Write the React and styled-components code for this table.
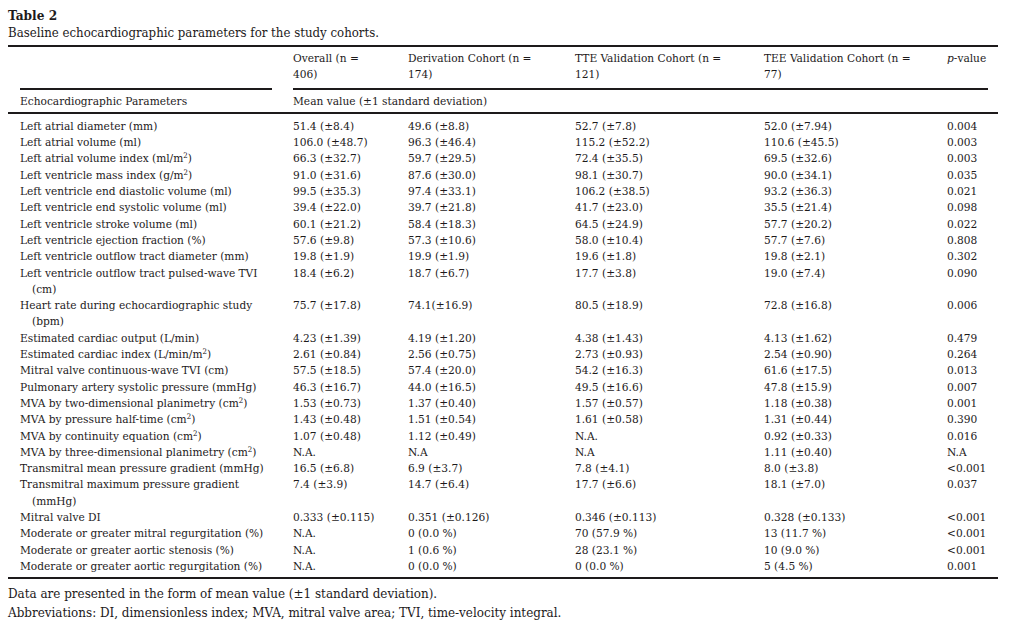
import React from 'react';
import styled, { createGlobalStyle } from 'styled-components';

const GlobalStyle = createGlobalStyle`
    html, body {
        margin: 0;
        padding: 0;
        background: #ffffff;
    }
    body {
        font-family: "DejaVu Serif Condensed", "DejaVu Serif", "Liberation Serif", serif;
        font-stretch: condensed;
        color: #1d1a1b;
    }
`

const COLUMNS = '285px 115px 167px 189px 183px 51px';

const Page = styled.div`
    padding: 7px 8px 0 8px;
    width: 990px;
`

const Title = styled.div`
    font-size: 13.5px;
    font-weight: 700;
    line-height: 17px;
`

const Caption = styled.div`
    font-size: 13.1px;
    line-height: 17px;
    margin-bottom: 4px;
`

const Table = styled.div`
    border-top: 2px solid #1d1a1b;
    border-bottom: 2px solid #1d1a1b;
    font-size: 11.8px;
    line-height: 16.3px;
`

const Row = styled.div`
    display: grid;
    grid-template-columns: ${COLUMNS};
    padding-top: ${(p) => p.$top || 0}px;
    padding-bottom: ${(p) => p.$bottom || 0}px;
    border-bottom: ${(p) => (p.$ruled ? '2px solid #1d1a1b' : 'none')};
`

const Cell = styled.div`
    padding-left: ${(p) => (p.$first ? 12 : 0)}px;
    white-space: nowrap;
    grid-column: ${(p) => p.$span || 'auto'};
`

const Wrap = styled.div`
    padding-left: 12px;
`

const RuleRow = styled.div`
    display: grid;
    grid-template-columns: ${COLUMNS};
`

const Rule = styled.div`
    height: 2px;
    background: #1d1a1b;
    grid-column: ${(p) => p.$span};
    margin-left: ${(p) => p.$left}px;
    margin-right: ${(p) => p.$right}px;
`

const Sup = styled.sup`
    font-size: 0.66em;
    line-height: 0;
    vertical-align: 0.55em;
`

const Italic = styled.i`
    font-style: italic;
`

const Notes = styled.div`
    font-size: 13.3px;
    line-height: 19px;
    margin-top: 5px;
`

const withSup = (text) => {
    const parts = text.split('^2');
    return parts.map((part, i) => (
        <React.Fragment key={i}>
            {part}
            {i < parts.length - 1 && <Sup>2</Sup>}
        </React.Fragment>
    ));
};

const headers = [
    ['Overall (n =', '406)'],
    ['Derivation Cohort (n =', '174)'],
    ['TTE Validation Cohort (n =', '121)'],
    ['TEE Validation Cohort (n =', '77)'],
];

const rows = [
    { label: 'Left atrial diameter (mm)', values: ['51.4 (±8.4)', '49.6 (±8.8)', '52.7 (±7.8)', '52.0 (±7.94)', '0.004'] },
    { label: 'Left atrial volume (ml)', values: ['106.0 (±48.7)', '96.3 (±46.4)', '115.2 (±52.2)', '110.6 (±45.5)', '0.003'] },
    { label: 'Left atrial volume index (ml/m^2)', values: ['66.3 (±32.7)', '59.7 (±29.5)', '72.4 (±35.5)', '69.5 (±32.6)', '0.003'] },
    { label: 'Left ventricle mass index (g/m^2)', values: ['91.0 (±31.6)', '87.6 (±30.0)', '98.1 (±30.7)', '90.0 (±34.1)', '0.035'] },
    { label: 'Left ventricle end diastolic volume (ml)', values: ['99.5 (±35.3)', '97.4 (±33.1)', '106.2 (±38.5)', '93.2 (±36.3)', '0.021'] },
    { label: 'Left ventricle end systolic volume (ml)', values: ['39.4 (±22.0)', '39.7 (±21.8)', '41.7 (±23.0)', '35.5 (±21.4)', '0.098'] },
    { label: 'Left ventricle stroke volume (ml)', values: ['60.1 (±21.2)', '58.4 (±18.3)', '64.5 (±24.9)', '57.7 (±20.2)', '0.022'] },
    { label: 'Left ventricle ejection fraction (%)', values: ['57.6 (±9.8)', '57.3 (±10.6)', '58.0 (±10.4)', '57.7 (±7.6)', '0.808'] },
    { label: 'Left ventricle outflow tract diameter (mm)', values: ['19.8 (±1.9)', '19.9 (±1.9)', '19.6 (±1.8)', '19.8 (±2.1)', '0.302'] },
    { label: 'Left ventricle outflow tract pulsed-wave TVI', wrap: '(cm)', values: ['18.4 (±6.2)', '18.7 (±6.7)', '17.7 (±3.8)', '19.0 (±7.4)', '0.090'] },
    { label: 'Heart rate during echocardiographic study', wrap: '(bpm)', values: ['75.7 (±17.8)', '74.1(±16.9)', '80.5 (±18.9)', '72.8 (±16.8)', '0.006'] },
    { label: 'Estimated cardiac output (L/min)', values: ['4.23 (±1.39)', '4.19 (±1.20)', '4.38 (±1.43)', '4.13 (±1.62)', '0.479'] },
    { label: 'Estimated cardiac index (L/min/m^2)', values: ['2.61 (±0.84)', '2.56 (±0.75)', '2.73 (±0.93)', '2.54 (±0.90)', '0.264'] },
    { label: 'Mitral valve continuous-wave TVI (cm)', values: ['57.5 (±18.5)', '57.4 (±20.0)', '54.2 (±16.3)', '61.6 (±17.5)', '0.013'] },
    { label: 'Pulmonary artery systolic pressure (mmHg)', values: ['46.3 (±16.7)', '44.0 (±16.5)', '49.5 (±16.6)', '47.8 (±15.9)', '0.007'] },
    { label: 'MVA by two-dimensional planimetry (cm^2)', values: ['1.53 (±0.73)', '1.37 (±0.40)', '1.57 (±0.57)', '1.18 (±0.38)', '0.001'] },
    { label: 'MVA by pressure half-time (cm^2)', values: ['1.43 (±0.48)', '1.51 (±0.54)', '1.61 (±0.58)', '1.31 (±0.44)', '0.390'] },
    { label: 'MVA by continuity equation (cm^2)', values: ['1.07 (±0.48)', '1.12 (±0.49)', 'N.A.', '0.92 (±0.33)', '0.016'] },
    { label: 'MVA by three-dimensional planimetry (cm^2)', values: ['N.A.', 'N.A', 'N.A', '1.11 (±0.40)', 'N.A'] },
    { label: 'Transmitral mean pressure gradient (mmHg)', values: ['16.5 (±6.8)', '6.9 (±3.7)', '7.8 (±4.1)', '8.0 (±3.8)', '<0.001'] },
    { label: 'Transmitral maximum pressure gradient', wrap: '(mmHg)', values: ['7.4 (±3.9)', '14.7 (±6.4)', '17.7 (±6.6)', '18.1 (±7.0)', '0.037'] },
    { label: 'Mitral valve DI', values: ['0.333 (±0.115)', '0.351 (±0.126)', '0.346 (±0.113)', '0.328 (±0.133)', '<0.001'] },
    { label: 'Moderate or greater mitral regurgitation (%)', values: ['N.A.', '0 (0.0 %)', '70 (57.9 %)', '13 (11.7 %)', '<0.001'] },
    { label: 'Moderate or greater aortic stenosis (%)', values: ['N.A.', '1 (0.6 %)', '28 (23.1 %)', '10 (9.0 %)', '<0.001'] },
    { label: 'Moderate or greater aortic regurgitation (%)', values: ['N.A.', '0 (0.0 %)', '0 (0.0 %)', '5 (4.5 %)', '0.001'] },
];

const App = () => {
    return (
        <Page>
            <GlobalStyle />
            <Title>Table 2</Title>
            <Caption>Baseline echocardiographic parameters for the study cohorts.</Caption>
            <Table>
                <Row $top={3} $bottom={5}>
                    <Cell $first />
                    {headers.map((lines) => (
                        <Cell key={lines[0]}>
                            {lines[0]}
                            <br />
                            {lines[1]}
                        </Cell>
                    ))}
                    <Cell>
                        <Italic>p</Italic>-value
                    </Cell>
                </Row>
                <RuleRow>
                    <Rule $span="1" $left={12} $right={21} />
                    <Rule $span="2 / -1" $left={0} $right={10} />
                </RuleRow>
                <Row $top={3} $bottom={3} $ruled>
                    <Cell $first>Echocardiographic Parameters</Cell>
                    <Cell $span="2 / -1">Mean value (±1 standard deviation)</Cell>
                </Row>
                <Row $top={4} />
                {rows.map((row) => (
                    <Row key={row.label}>
                        <Cell $first>
                            {withSup(row.label)}
                            {row.wrap && <Wrap>{row.wrap}</Wrap>}
                        </Cell>
                        {row.values.map((value, i) => (
                            <Cell key={i}>{value}</Cell>
                        ))}
                    </Row>
                ))}
                <Row $bottom={3} />
            </Table>
            <Notes>
                Data are presented in the form of mean value (±1 standard deviation).
                <br />
                Abbreviations: DI, dimensionless index; MVA, mitral valve area; TVI, time-velocity integral.
            </Notes>
        </Page>
    );
};

export default App;
